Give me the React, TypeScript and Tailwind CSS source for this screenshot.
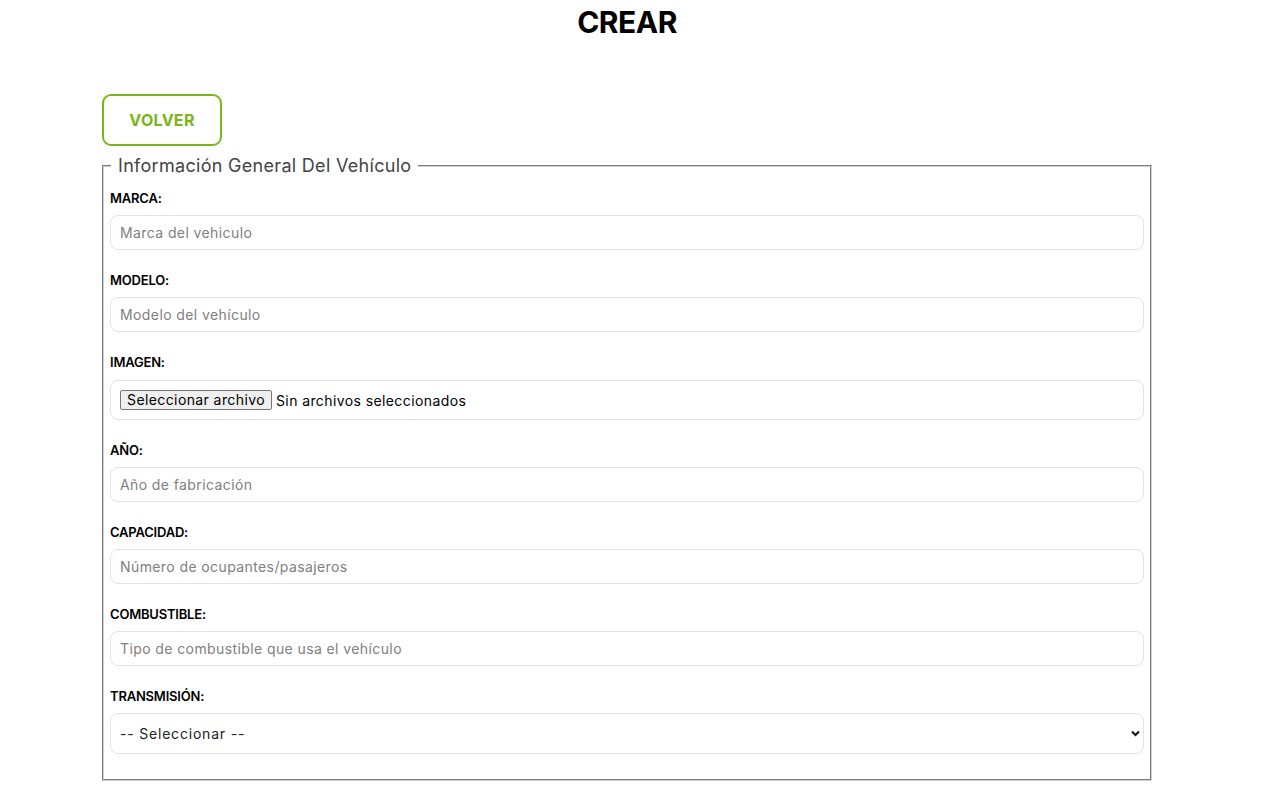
import React, { useState } from "react";

type Field = {
  label: string;
  placeholder: string;
};

const fields: Field[] = [
  { label: "MARCA:", placeholder: "Marca del vehiculo" },
  { label: "MODELO:", placeholder: "Modelo del vehículo" },
];

const moreFields: Field[] = [
  { label: "AÑO:", placeholder: "Año de fabricación" },
  { label: "CAPACIDAD:", placeholder: "Número de ocupantes/pasajeros" },
  { label: "COMBUSTIBLE:", placeholder: "Tipo de combustible que usa el vehículo" },
];

const TextField: React.FC<Field> = ({ label, placeholder }) => (
  <div className="mb-[20px]">
    <label className="block text-[13px] font-semibold leading-[20px] tracking-[-0.2px] text-black mb-[7px]">
      {label}
    </label>
    <input
      type="text"
      placeholder={placeholder}
      className="block w-full h-[35px] px-[9px] border border-[#e3e3e3] rounded-[8px] text-[14px] tracking-[0.4px] text-[#333] placeholder:text-[#808080] outline-none"
    />
  </div>
);

const App: React.FC = () => {
  const [transmision, setTransmision] = useState("");

  return (
    <div className="min-h-[788px] bg-white font-['Inter',sans-serif] text-black">
      <div className="ml-[102px] w-[1050px]">
        <h1 className="text-center text-[30px] font-bold leading-[44px] tracking-[-0.5px]">
          CREAR
        </h1>

        <button className="mt-[50px] w-[120px] h-[52px] border-2 border-[#7cb518] rounded-[9px] text-[#7cb518] text-[16px] font-bold tracking-[0.3px]">
          VOLVER
        </button>

        <fieldset className="mt-[6px] border-2 [border-style:groove] border-[#d0d0d0] pl-[6px] pr-[6px] pb-[4px]">
          <legend className="ml-[1px] px-[7px] text-[18px] leading-[27px] tracking-[0.3px] text-[#444]">
            Información General Del Vehículo
          </legend>

          <div className="pt-[9px]">
            {fields.map((f) => (
              <TextField key={f.label} {...f} />
            ))}

            <div className="mb-[20px]">
              <label className="block text-[13px] font-semibold leading-[20px] tracking-[-0.2px] mb-[8px]">
                IMAGEN:
              </label>
              <div className="flex items-center h-[40px] px-[9px] border border-[#e3e3e3] rounded-[8px] text-[14px] tracking-[0.4px]">
                <span className="h-[20px] px-[6px] flex items-center border border-[#767676] rounded-[2px] bg-[#efefef] leading-none">
                  Seleccionar archivo
                </span>
                <span className="ml-[4px]">Sin archivos seleccionados</span>
              </div>
            </div>

            {moreFields.map((f) => (
              <TextField key={f.label} {...f} />
            ))}

            <div className="mb-[21px]">
              <label className="block text-[13px] font-semibold leading-[20px] tracking-[-0.2px] mb-[7px]">
                TRANSMISIÓN:
              </label>
              <div className="relative">
                <select
                  value={transmision}
                  onChange={(e) => setTransmision(e.target.value)}
                  className="block w-full h-[41px] px-[9px] appearance-none bg-white border border-[#e3e3e3] rounded-[8px] text-[14px] tracking-[0.8px] text-[#222] outline-none"
                >
                  <option value="">-- Seleccionar --</option>
                  <option value="manual">Manual</option>
                  <option value="automatica">Automática</option>
                </select>
                <svg
                  className="absolute right-[4px] top-[17px] pointer-events-none"
                  width="9"
                  height="7"
                  viewBox="0 0 9 7"
                  fill="none"
                >
                  <path d="M1 1.5l3.5 3.5L8 1.5" stroke="#111" strokeWidth="2" />
                </svg>
              </div>
            </div>
          </div>
        </fieldset>
      </div>
    </div>
  );
};

export default App;
